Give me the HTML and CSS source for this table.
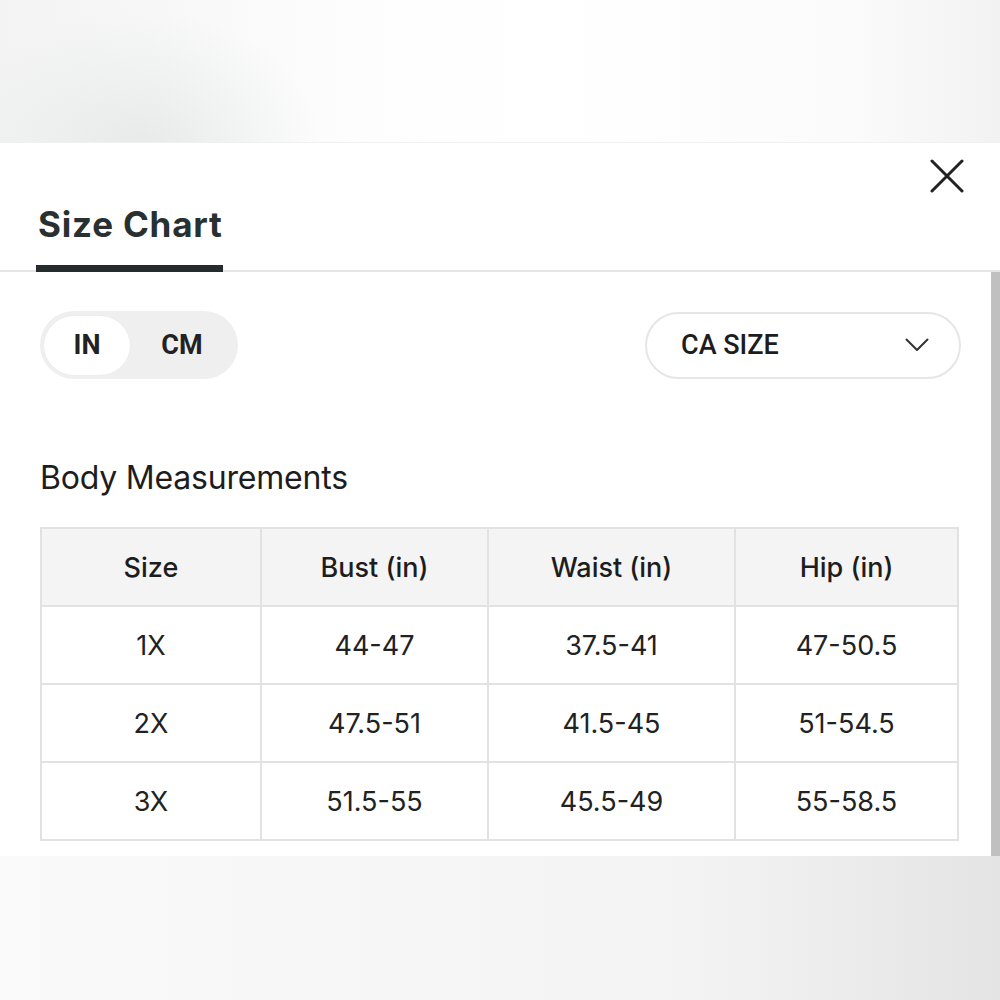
FILE: index.html
```html
<!DOCTYPE html>
<html lang="en">
<head>
<meta charset="utf-8">
<title>Size Chart</title>
<link rel="stylesheet" href="styles.css">
</head>
<body>
<div class="band band-top"></div>
<section class="panel">
  <header class="panel-head">
    <div class="tab">Size Chart</div>
    <button class="close" aria-label="Close">
      <svg width="34" height="34" viewBox="0 0 34 34"><path d="M2 2 L32 32 M32 2 L2 32" stroke="#222" stroke-width="3" stroke-linecap="round" fill="none"/></svg>
    </button>
  </header>
  <div class="panel-body">
    <div class="content">
      <div class="controls">
        <div class="unit-toggle">
          <span class="unit active">IN</span>
          <span class="unit">CM</span>
        </div>
        <div class="select">
          <span>CA SIZE</span>
          <svg width="24" height="14" viewBox="0 0 24 14"><path d="M1.5 1.5 L12 12 L22.5 1.5" stroke="#333" stroke-width="2" fill="none" stroke-linecap="round" stroke-linejoin="round"/></svg>
        </div>
      </div>
      <h2 class="section-title">Body Measurements</h2>
      <table class="chart">
        <colgroup>
          <col class="c1"><col class="c2"><col class="c3"><col class="c4">
        </colgroup>
        <thead>
          <tr><th>Size</th><th>Bust (in)</th><th>Waist (in)</th><th>Hip (in)</th></tr>
        </thead>
        <tbody>
          <tr><td>1X</td><td>44-47</td><td>37.5-41</td><td>47-50.5</td></tr>
          <tr><td>2X</td><td>47.5-51</td><td>41.5-45</td><td>51-54.5</td></tr>
          <tr><td>3X</td><td>51.5-55</td><td>45.5-49</td><td>55-58.5</td></tr>
        </tbody>
      </table>
    </div>
    <div class="scrollbar"></div>
  </div>
</section>
<div class="band band-bottom"></div>
</body>
</html>
```

FILE: styles.css
```css
* { box-sizing: border-box; }
html, body { margin: 0; padding: 0; }
body {
  width: 1000px;
  height: 1000px;
  overflow: hidden;
  font-family: Inter, "Liberation Sans", sans-serif;
  color: #222;
  background: #f4f4f4;
}
.band { width: 100%; }
.band-top {
  height: 143px;
  background:
    radial-gradient(ellipse 260px 200px at 140px 150px, rgba(225,228,228,0.7), rgba(255,255,255,0) 70%),
    linear-gradient(90deg, #f3f3f3 0%, #fdfdfd 35%, #ffffff 55%, #fbfbfb 85%, #f2f2f2 100%);
  border-bottom: 1px solid #f0f0f0;
}
.band-bottom {
  height: 144px;
  background: linear-gradient(90deg, #fafafa 0%, #f6f6f6 40%, #f3f3f3 70%, #e4e4e4 100%);
}
.panel {
  background: #fff;
  height: 713px;
  display: flex;
  flex-direction: column;
}
.panel-head {
  height: 129px;
  display: flex;
  justify-content: space-between;
  align-items: flex-start;
  padding: 0 36px 0 36px;
  border-bottom: 2px solid #e4e4e4;
  flex: none;
}
.tab {
  align-self: flex-end;
  margin-bottom: -2px;
  padding: 0 0 21px 2px;
  border-bottom: 7px solid #262b2b;
  font-size: 35px;
  font-weight: 700;
  line-height: 40px;
  color: #283030;
  letter-spacing: 0.8px;
}
.close {
  margin-top: 16px;
  padding: 0;
  border: 0;
  background: none;
  width: 34px;
  height: 34px;
}
.close svg { display: block; }
.panel-body {
  flex: 1;
  display: flex;
  min-height: 0;
}
.content {
  flex: 1;
  padding: 39px 30px 0 40px;
}
.scrollbar {
  width: 9px;
  background: #c0c0c0;
  flex: none;
}
.controls {
  display: flex;
  justify-content: space-between;
  align-items: center;
}
.unit-toggle {
  display: flex;
  align-items: center;
  height: 68px;
  padding: 0 4px;
  background: #efefef;
  border-radius: 34px;
  font-family: Roboto, "Liberation Sans", sans-serif;
  font-weight: 700;
  font-size: 27px;
  color: #222;
}
.unit {
  display: flex;
  align-items: center;
  justify-content: center;
  height: 59px;
  width: 104px;
}
.unit.active {
  width: 86px;
  background: #fff;
  border-radius: 30px;
  box-shadow: 0 0 1px rgba(0,0,0,0.08);
}
.select {
  width: 316px;
  height: 67px;
  border: 2px solid #e6e6e6;
  border-radius: 34px;
  display: flex;
  align-items: center;
  justify-content: space-between;
  padding: 0 30px 0 34px;
  font-family: Roboto, "Liberation Sans", sans-serif;
  font-weight: 500;
  font-size: 27px;
  color: #1d1d1d;
}
.select svg { display: block; }
.section-title {
  margin: 79px 0 29px;
  font-size: 32px;
  line-height: 40px;
  font-weight: 400;
  color: #1d1d1d;
  letter-spacing: -0.2px;
}
.chart {
  width: 917px;
  border-collapse: collapse;
  table-layout: fixed;
  font-size: 27px;
  color: #222;
}
.c1 { width: 220px; }
.c2 { width: 227px; }
.c3 { width: 247px; }
.c4 { width: 223px; }
.chart th, .chart td {
  border: 2px solid #e2e2e2;
  height: 78px;
  text-align: center;
  vertical-align: middle;
  padding: 0;
}
.chart th {
  background: #f4f4f4;
  font-weight: 500;
  color: #1d1d1d;
}
.chart td { font-weight: 400; }
```
